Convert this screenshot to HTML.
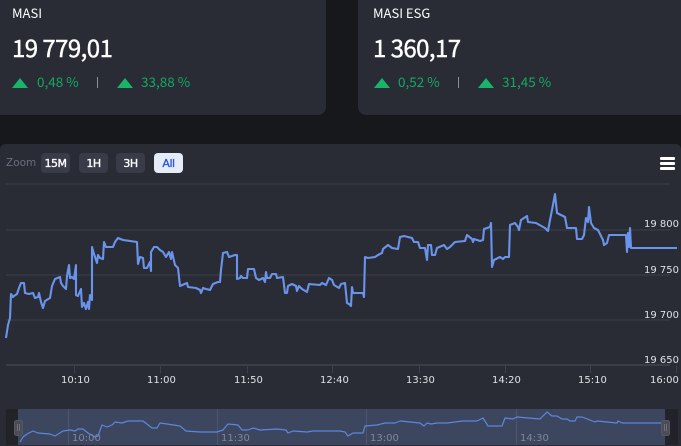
<!DOCTYPE html>
<html>
<head>
<meta charset="utf-8">
<style>
html,body{margin:0;padding:0;width:681px;height:446px;overflow:hidden;background:#17181c}
.a{position:absolute}
.card{position:absolute;top:-20px;height:135px;background:#292c35}
.t{position:absolute;white-space:nowrap;font-family:"Noto Sans CJK JP","Liberation Sans",sans-serif;line-height:1}
.name{top:6px;font-size:13px;color:#fff}
.val{top:35px;font-size:24px;color:#fff;letter-spacing:-.55px;-webkit-text-stroke:.4px #fff}
.pct{top:75px;font-size:13.5px;color:#16a862}
.tri{position:absolute;top:78px;width:0;height:0;border-left:8px solid transparent;border-right:8px solid transparent;border-bottom:10px solid #19b46a}
.sep{position:absolute;top:77px;width:1px;height:11px;background:#8d8f99}
.btn{position:absolute;top:153px;width:29px;height:20px;border-radius:4px;background:#393c48;color:#fff;font:11px/21px "DejaVu Sans",sans-serif;letter-spacing:-.5px;text-align:center;-webkit-text-stroke:.35px currentColor}
.d{position:absolute;white-space:nowrap;font:10px/13px "DejaVu Sans",sans-serif;color:#dfe0e4}
.grid{position:absolute;left:6px;width:664px;height:2px;background:#33363e}
</style>
</head>
<body>
<div class="card" style="left:-10px;width:336px;border-radius:8px"></div>
<div class="card" style="left:358px;width:340px;border-radius:8px"></div>

<div class="t name" style="left:12px">MASI</div>
<div class="t val" style="left:12px">19 779,01</div>
<div class="tri" style="left:12px"></div>
<div class="t pct" style="left:37px">0,48 %</div>
<div class="sep" style="left:97px"></div>
<div class="tri" style="left:117px"></div>
<div class="t pct" style="left:141px">33,88 %</div>

<div class="t name" style="left:373px">MASI ESG</div>
<div class="t val" style="left:373px">1 360,17</div>
<div class="tri" style="left:374px"></div>
<div class="t pct" style="left:398px">0,52 %</div>
<div class="sep" style="left:458px"></div>
<div class="tri" style="left:478px"></div>
<div class="t pct" style="left:502px">31,45 %</div>

<div class="a" style="left:0;top:144px;width:681px;height:302px;background:#292c35;border-radius:5px 5px 0 0"></div>

<div class="d" style="left:6px;top:157px;color:#6b6e80;font-size:10.5px">Zoom</div>
<div class="btn" style="left:41px">15M</div>
<div class="btn" style="left:79px">1H</div>
<div class="btn" style="left:116px">3H</div>
<div class="btn" style="left:154px;background:#e6ebf8;color:#2a55e5">All</div>

<div class="a" style="left:660px;top:157px;width:15px;height:3px;background:#fff;border-radius:1px"></div>
<div class="a" style="left:660px;top:162px;width:15px;height:3px;background:#fff;border-radius:1px"></div>
<div class="a" style="left:660px;top:167px;width:15px;height:3px;background:#fff;border-radius:1px"></div>

<div class="grid" style="top:183px"></div>
<div class="grid" style="top:229px"></div>
<div class="grid" style="top:274px"></div>
<div class="grid" style="top:319px"></div>
<div class="grid" style="top:364px;background:#3b3e47"></div>

<div class="a" style="left:74px;top:366px;width:1px;height:7px;background:#3f424c"></div>
<div class="a" style="left:160px;top:366px;width:1px;height:7px;background:#3f424c"></div>
<div class="a" style="left:247px;top:366px;width:1px;height:7px;background:#3f424c"></div>
<div class="a" style="left:332px;top:366px;width:1px;height:7px;background:#3f424c"></div>
<div class="a" style="left:419px;top:366px;width:1px;height:7px;background:#3f424c"></div>
<div class="a" style="left:505px;top:366px;width:1px;height:7px;background:#3f424c"></div>
<div class="a" style="left:590px;top:366px;width:1px;height:7px;background:#3f424c"></div>
<div class="a" style="left:676px;top:366px;width:1px;height:7px;background:#3f424c"></div>

<div class="d" style="left:644px;top:218px">19 800</div>
<div class="d" style="left:644px;top:264px">19 750</div>
<div class="d" style="left:644px;top:309px">19 700</div>
<div class="d" style="left:644px;top:354px">19 650</div>

<div class="d" style="left:61px;top:374px">10:10</div>
<div class="d" style="left:147px;top:374px">11:00</div>
<div class="d" style="left:234px;top:374px">11:50</div>
<div class="d" style="left:320px;top:374px">12:40</div>
<div class="d" style="left:406px;top:374px">13:30</div>
<div class="d" style="left:492px;top:374px">14:20</div>
<div class="d" style="left:578px;top:374px">15:10</div>
<div class="d" style="left:650px;top:374px">16:00</div>

<svg class="a" style="left:0;top:0" width="681" height="446" viewBox="0 0 681 446" fill="none">
<polyline stroke="#6a93ec" stroke-width="2.1" stroke-linejoin="round" points="6,338 8,325 10,318 11,294 13,297 14,296 17,294 19,288 21,283 24,283 25,293 29,294 33,293 35,298 38,297 39,293 41,302 43,308 45,301 50,298 52,286 55,279 60,277 61,283 63,286 66,289 67,276 69,265 70,278 72,277 74,279 76,265 76,295 78,296 81,289 82,307 84,303 86,309 88,302 89,309 90,295 92,300 92,247 94,254 97,263 98,255 100,258 103,259 104,242 106,247 108,247 113,247 115,242 118,238 123,240 130,241 137,242 138,264 140,257 143,258 144,268 147,268 150,262 151,271 151,252 154,247 157,247 160,250 163,252 166,257 169,252 171,259 172,252 175,265 178,268 180,286 187,283 188,287 196,288 200,290 201,293 203,288 206,289 210,290 213,284 218,282 220,282 221,270 223,253 227,252 229,257 235,255 237,255 237,279 240,278 241,276 243,278 247,278 248,269 254,269 256,278 259,280 263,278 265,282 266,272 267,278 270,278 272,274 276,274 277,278 283,277 285,293 287,293 288,286 292,284 296,286 297,291 299,286 302,289 307,292 309,284 320,285 322,283 326,285 329,278 332,280 334,285 339,288 341,284 345,283 347,303 349,304 351,306 352,287 353,293 363,293 364,297 365,257 368,258 375,257 378,255 382,253 383,249 388,245 392,248 398,249 400,237 404,236 412,238 414,242 418,242 420,248 425,248 427,260 428,245 431,245 432,255 435,255 437,248 444,245 447,249 450,247 455,242 465,241 467,235 472,239 473,242 474,239 480,241 483,240 484,229 490,227 491,223 492,267 494,260 500,257 503,259 505,257 509,257 510,225 515,223 518,227 519,230 521,220 527,216 528,222 536,223 545,228 548,231 550,220 552,210 555,194 557,213 565,217 567,228 576,228 577,239 582,239 584,235 586,218 588,222 589,207 591,223 594,228 598,230 603,240 604,245 607,243 609,235 626,235 627,252 628,233 629,247 630,228 631,248 677,248"/>
</svg>

<div class="a" style="left:6px;top:409px;width:672px;height:36px;background:#212329"></div>
<div class="a" style="left:18px;top:409px;width:647px;height:36px;background:#3d465f"></div>
<div class="a" style="left:68px;top:409px;width:1px;height:36px;background:#4c556d"></div>
<div class="a" style="left:217px;top:409px;width:1px;height:36px;background:#4c556d"></div>
<div class="a" style="left:366px;top:409px;width:1px;height:36px;background:#4c556d"></div>
<div class="a" style="left:516px;top:409px;width:1px;height:36px;background:#4c556d"></div>

<div class="d" style="left:72px;top:432px;color:#80869a">10:00</div>
<div class="d" style="left:221px;top:432px;color:#80869a">11:30</div>
<div class="d" style="left:370px;top:432px;color:#80869a">13:00</div>
<div class="d" style="left:520px;top:432px;color:#80869a">14:30</div>

<svg class="a" style="left:0;top:0" width="681" height="446" viewBox="0 0 681 446" fill="none">
<polyline stroke="#5d86de" stroke-width="1.2" stroke-linejoin="round" points="20,442 23,437 27,434 33,431 38,433 50,434 55,436 63,431 70,430 75,431 78,429 83,429 88,433 95,437 98,436 102,425 107,427 112,425 115,422 122,423 128,421 143,421 152,428 157,428 160,423 167,424 180,426 186,431 200,432 217,432 223,430 228,424 238,425 242,430 248,430 253,428 260,430 277,429 286,430 288,433 293,431 307,432 313,431 328,431 340,431 345,432 348,436 353,433 363,433 365,426 377,425 385,423 395,423 400,421 420,423 424,426 427,423 431,424 437,423 447,423 463,421 477,421 483,418 488,426 502,426 505,418 513,419 517,417 540,419 547,412 552,416 557,416 562,419 567,419 570,421 575,421 577,417 582,417 595,422 597,421 617,423 618,421 622,423 662,423"/>
<rect x="14.5" y="420.5" width="8" height="15" rx="2" fill="#4a4d57" stroke="#555862"/>
<path d="M17.5 424v7M19.5 424v7" stroke="#6d707a"/>
<rect x="661.5" y="420.5" width="8" height="15" rx="2" fill="#4a4d57" stroke="#555862"/>
<path d="M664.5 424v7M666.5 424v7" stroke="#6d707a"/>
</svg>
</body>
</html>
